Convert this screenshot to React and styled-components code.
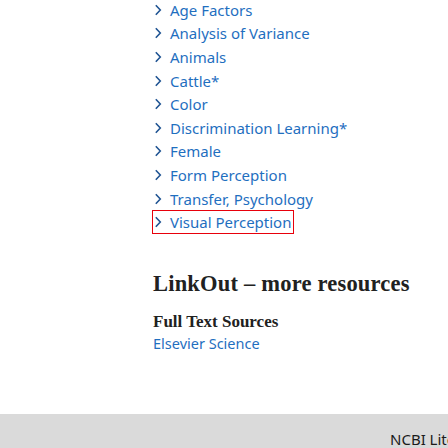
import React from "react";
import styled, { createGlobalStyle } from "styled-components";

const Global = createGlobalStyle`
  html, body { margin: 0; padding: 0; background: #fff; overflow: hidden; }
  body { width: 448px; height: 448px; }
`;

const Page = styled.div`
  width: 448px;
  height: 448px;
  display: flex;
  flex-direction: column;
  overflow: hidden;
`;

const Main = styled.main`
  flex: 1;
  padding-left: 153px;
  display: flex;
  flex-direction: column;
  align-items: flex-start;
`;

const TermList = styled.ul`
  list-style: none;
  margin: -2px 0 0;
  padding: 0;
  font-family: "Noto Sans", "Open Sans", sans-serif;
  font-size: 15px;
`;

const Term = styled.li`
  height: 23.6px;
  display: flex;
  align-items: center;
`;

const TermLink = styled.a`
  display: inline-flex;
  align-items: center;
  gap: 8px;
  height: 22px;
  padding: 0 2px 0 1px;
  margin-left: -1px;
  color: #1f6fbf;
  text-decoration: none;
  border: 1px solid ${(p) => (p.$focused ? "#e8000b" : "transparent")};
  white-space: nowrap;
`;

const Chevron = () => (
  <svg width="8" height="12" viewBox="0 0 8 12" aria-hidden="true">
    <path d="M1.8 1.2 L6.3 6 L1.8 10.8" fill="none" stroke="#205493" strokeWidth="1.6" />
  </svg>
);

const Heading = styled.h2`
  margin: 36px 0 0;
  font-family: "Liberation Serif", "DejaVu Serif", serif;
  font-weight: bold;
  font-size: 22.5px;
  line-height: 28px;
  color: #212121;
  letter-spacing: 0.2px;
  white-space: nowrap;
`;

const SubHeading = styled.h3`
  margin: 14px 0 0;
  font-family: "Liberation Serif", serif;
  font-weight: bold;
  font-size: 17px;
  line-height: 20px;
  color: #212121;
`;

const Provider = styled.a`
  margin-top: 1px;
  font-family: "Noto Sans", sans-serif;
  font-size: 14.5px;
  line-height: 20px;
  color: #1f6fbf;
  text-decoration: none;
`;

const Footer = styled.footer`
  height: 34px;
  flex-shrink: 0;
  background: #dadada;
  padding-left: 390px;
  padding-top: 15px;
  box-sizing: border-box;
  font-family: "Noto Sans", sans-serif;
  font-size: 15px;
  line-height: 20px;
  color: #1b1b1b;
  white-space: nowrap;
  overflow: hidden;
`;

const terms = [
  "Age Factors",
  "Analysis of Variance",
  "Animals",
  "Cattle*",
  "Color",
  "Discrimination Learning*",
  "Female",
  "Form Perception",
  "Transfer, Psychology",
  "Visual Perception",
];

export default function App() {
  return (
    <Page>
      <Global />
      <Main>
        <TermList>
          {terms.map((t, i) => (
            <Term key={t}>
              <TermLink href="#" $focused={i === terms.length - 1}>
                <Chevron />
                {t}
              </TermLink>
            </Term>
          ))}
        </TermList>
        <Heading>LinkOut – more resources</Heading>
        <SubHeading>Full Text Sources</SubHeading>
        <Provider href="#">Elsevier Science</Provider>
      </Main>
      <Footer>NCBI Literature Resources</Footer>
    </Page>
  );
}
